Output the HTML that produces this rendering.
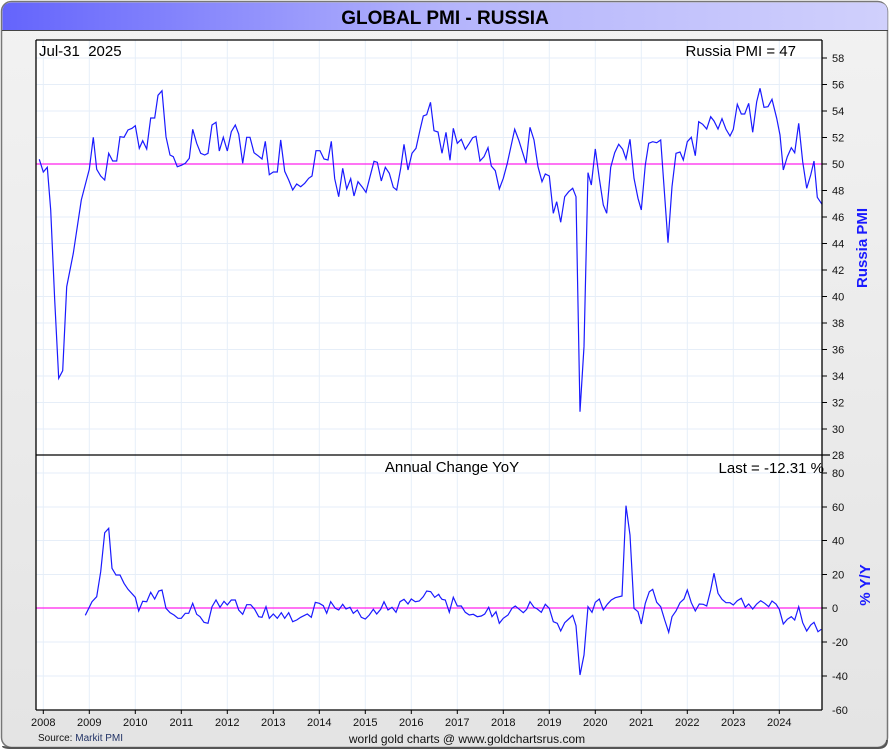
<!DOCTYPE html>
<html><head><meta charset="utf-8"><style>
html,body{margin:0;padding:0;background:#fff;}
svg{display:block;font-family:"Liberation Sans",Arial,sans-serif;}
</style></head><body>
<svg width="890" height="750" viewBox="0 0 890 750" xmlns="http://www.w3.org/2000/svg">
<defs>
<linearGradient id="tb" x1="0" x2="1" y1="0" y2="0">
<stop offset="0" stop-color="#6464fc"/><stop offset="0.5" stop-color="#b4b4fc"/><stop offset="1" stop-color="#d0d0fc"/></linearGradient>
<linearGradient id="bg" x1="0" x2="0" y1="0" y2="1">
<stop offset="0" stop-color="#f2f2f2"/><stop offset="1" stop-color="#e4e4e4"/></linearGradient>
</defs>
<rect x="0" y="0" width="890" height="750" fill="#fff"/>
<rect x="1.5" y="1.5" width="886" height="746" rx="10" fill="url(#bg)" stroke="#777" stroke-width="1.5"/>
<path d="M3 746 Q3 748 12 748 L878 748 Q887 748 887 740" fill="none" stroke="#555" stroke-width="2"/>
<path d="M2.5 30 L2.5 12 Q2.5 2.5 12 2.5 L878 2.5 Q887.5 2.5 887.5 12 L887.5 30 Z" fill="url(#tb)"/>
<line x1="2" y1="30.5" x2="888" y2="30.5" stroke="#444" stroke-width="1"/>
<text x="445" y="24" text-anchor="middle" font-size="19" font-weight="bold" fill="#000">GLOBAL PMI - RUSSIA</text>
<rect x="36" y="40" width="786" height="670" fill="#fff"/>
<g stroke="#e6eef8" stroke-width="1">
<path d="M43.3 40V710M89.3 40V710M135.3 40V710M181.3 40V710M227.3 40V710M273.3 40V710M319.3 40V710M365.3 40V710M411.3 40V710M457.3 40V710M503.3 40V710M549.3 40V710M595.3 40V710M641.3 40V710M687.3 40V710M733.3 40V710M779.3 40V710"/>
<path d="M36 58H822M36 84.5H822M36 111H822M36 137.5H822M36 190.5H822M36 217H822M36 243.5H822M36 270H822M36 296.5H822M36 323H822M36 349.5H822M36 376H822M36 402.5H822M36 429H822"/>
<path d="M36 473H822M36 507H822M36 540.5H822M36 574.5H822M36 642H822M36 676H822"/>
</g>
<line x1="36" y1="164" x2="822" y2="164" stroke="#ff22ee" stroke-width="1.3"/>
<line x1="36" y1="608" x2="822" y2="608" stroke="#ff22ee" stroke-width="1.3"/>
<polyline fill="none" stroke="#1a1aff" stroke-width="1.2" points="39.3,159.3 43.3,172 47.3,167.3 50.7,210 54.7,300 58.7,378.3 62.7,370.7 66.7,286.7 73.3,253.3 81.3,200 89.3,169.3 93.3,137.3 96.7,169.3 100.7,176 104.7,180 108.7,153.3 112.7,161 116.7,161 120,136.7 124,137.3 128,130 132,128.3 135.3,125.7 139.3,148.3 142.7,140.7 146.7,149 150.7,118 154.7,118 158,95.3 162,90.7 166,136.7 170,155 173.3,156.7 177.3,166.7 181.3,165.3 185.3,163.3 189.3,158.3 192.7,129.3 196.7,143.3 200.7,153.3 204.7,155 208,153.3 212,125 216,122.3 219.3,151 223.3,137.3 227.3,151 231.3,131.7 235.3,125 238.7,134 242.7,163.3 246.7,137.3 250,137.3 254,152.7 258,155.7 262,159 265.3,141.3 269.3,174.7 273.3,172 277.3,172 280.7,140 284.7,171.3 288.7,180 292.7,190 296.7,184 300.7,186.7 304.7,183.3 308.7,178.3 312,176 316,150.7 320,150.7 324,159 328,160 331.3,141.3 334.7,178.7 338.7,196.7 342.7,168.3 346.7,189 350.7,178.7 354,196 358,181.7 362,186.7 366,192.3 370,176.7 374,161.3 377.3,162.3 381.3,181 385.3,167.3 389.3,173.3 393.3,187.3 396.7,190 400.7,168.3 404,144.3 408,170 412,153.3 416,148.3 420,130 423.3,116 426.7,114.7 430.5,102.3 434,130.7 438,132 442,153.3 446,132.3 450,160.3 453.3,128.3 457.3,143.3 461.3,139.3 465.3,149.3 469.3,143.3 472.7,137.7 476,136.3 480,161 484,156.7 488,147.7 491.3,166 495.3,170.7 499.3,189 503.3,178.3 507.3,163.3 514.7,129.3 518.7,140 526,163.3 530,127.3 534,140 538,166.7 542,181.7 545.3,174 549.3,176 553.3,213.3 556.7,201.7 560.7,222.3 564.7,196.7 568.7,191.7 572.7,188.3 576,196.7 580,411.7 584,346.7 588,172.7 591.3,185 595.3,149 599.3,178.3 603.3,205 606.7,213.3 610.7,167.3 614.7,152.7 618.7,144.3 622.7,149.3 626,159 630,139.3 634,178.3 638,198.3 641.3,210 645.3,165 648.7,143.3 652.7,141.7 656.7,142.7 660.7,140 668,242.7 672,186.7 676,153.3 680,152 683.3,160 687.3,141.7 691.3,137.3 695.3,155.7 698.7,121.7 702.7,124.3 706.7,129 710.7,116.7 714,121 718,129 722,118.7 726,129.3 730,136 733.3,129.3 737.3,104.3 741.3,114 744.7,114 748.7,103.3 752.7,132.3 756.7,101.7 760,88.3 764,107.3 768,106.7 772,99.3 776.7,118.3 780,135 783.3,170 787.3,156.7 791.3,147.7 794.7,152.7 798.7,123.3 802.7,161.7 806.7,188.3 810.7,175 814,161 817.3,197.3 822,204.3"/>
<polyline fill="none" stroke="#1a1aff" stroke-width="1.2" points="85.3,615.3 92,601.7 96.7,596.7 100.7,571.7 104.7,532.7 108.7,528.3 112,568.3 116,575 120,575 124,583.3 128,589.3 135.3,597.3 138.7,611 142.7,601.3 146.7,601.7 150.7,592.3 154.7,599 158.7,591 162,590 166,608.3 170,612.7 174,615 178,618.3 181.3,618.3 185.3,613.3 188.7,613.3 192.7,603.3 196.7,614.3 200,616.7 204,622.3 208,623.3 212,606.7 216,600 220,607.3 224,601.3 227.3,605 231.3,600 235.3,600 238.7,610 242.7,614.3 246.7,604.7 250.7,604.7 254.7,609.3 258.7,616.7 262,617.3 266,606.7 269.3,618.3 273.3,614 277.3,618.3 281.3,612.7 284.7,618.3 288.7,612.7 292.7,621.7 296.7,620 300.7,617.3 307.3,614 311.3,617.3 315.3,602.3 319.3,603.3 323.3,605.7 326.7,613.3 330.7,601.7 335.3,608.3 338.7,610 342.7,604.3 346,609 350,607.3 353.3,613.3 357.3,610 361.3,617.3 365.3,619 369.3,615 373.3,609.3 376.7,614 380.7,609.3 384,601.7 388,610 392,607.3 396,612.3 400,601.7 404,599.3 408,604 411.3,599 415.3,601.7 419.3,601 423.3,596.7 426.7,591 430.7,591.7 434.7,597.3 438.7,594.3 440,596.7 442,599.3 445.3,600 449.3,612.3 453.3,597.3 457.3,606 461.3,606 465.3,612.3 469.3,615 473.3,614.3 477.3,616.7 481.3,616 484.7,614 488.7,607.3 492,616.7 496,611.7 499.3,623.3 503.3,618.3 508,615 512,608.3 515.3,606 519.3,609.3 523.3,612.7 526.7,609.3 530,601.7 534,607.3 537.3,609 541.3,612.3 545.3,604.3 549.3,608.3 553.3,621.7 557.3,623.3 560.7,631 564.7,622.7 568.7,619 572.7,615.3 576,625.7 580,675 584,655 588,606.7 592,612.3 595.3,602.3 599.3,599 603.3,610 607.3,604.3 611.3,600 615.3,597.7 622,596 626,505.7 630,535 634,608.3 638,611.7 641.3,624 645.3,603.3 649.3,591.7 652.7,589.3 656.7,602.3 660.7,606.7 664.7,620 668.7,632.3 672,616.7 676,611 680,602.7 684,599 687.3,590 691.3,602.7 695.3,611 699.3,604 703.3,604.3 706.7,606 710.7,590 714,573.3 718,593.3 722,599.3 726,602.7 730,602.7 733.3,605 737.3,600.7 741.3,598.3 745.3,607.3 748.7,604 752.7,609 756.7,604 760.7,600.7 764.7,603.3 768.7,606.7 772,601 776,604 779.3,609.3 783.3,624 787.3,619.3 791.3,616.7 794.7,620 798.7,606.7 802.7,622.7 806.7,631 810.7,625 814,622.3 818,631.7 821.3,629.3"/>
<g stroke="#000" stroke-width="1.3" fill="none">
<line x1="36" y1="40" x2="822" y2="40"/>
<line x1="36" y1="40" x2="36" y2="710"/>
<line x1="36" y1="710" x2="822" y2="710"/>
<line x1="822" y1="40" x2="822" y2="710"/>
<line x1="36" y1="455" x2="830" y2="455"/>
</g>
<g stroke="#000" stroke-width="1">
<path d="M822 58h5M822 84.5h5M822 111h5M822 137.5h5M822 164h5M822 190.5h5M822 217h5M822 243.5h5M822 270h5M822 296.5h5M822 323h5M822 349.5h5M822 376h5M822 402.5h5M822 429h5"/>
<path d="M822 473h5M822 507h5M822 540.5h5M822 574.5h5M822 608h5M822 642h5M822 676h5"/>
<path d="M43.3 710v4M89.3 710v4M135.3 710v4M181.3 710v4M227.3 710v4M273.3 710v4M319.3 710v4M365.3 710v4M411.3 710v4M457.3 710v4M503.3 710v4M549.3 710v4M595.3 710v4M641.3 710v4M687.3 710v4M733.3 710v4M779.3 710v4"/>
</g>
<g font-size="11" fill="#111">
<text x="832" y="62">58</text><text x="832" y="88.5">56</text><text x="832" y="115">54</text><text x="832" y="141.5">52</text><text x="832" y="168">50</text><text x="832" y="194.5">48</text><text x="832" y="221">46</text><text x="832" y="247.5">44</text><text x="832" y="274">42</text><text x="832" y="300.5">40</text><text x="832" y="327">38</text><text x="832" y="353.5">36</text><text x="832" y="380">34</text><text x="832" y="406.5">32</text><text x="832" y="433">30</text><text x="832" y="459">28</text>
<text x="832" y="477">80</text><text x="832" y="511">60</text><text x="832" y="544.5">40</text><text x="832" y="578.5">20</text><text x="832" y="612">0</text><text x="832" y="646">-20</text><text x="832" y="680">-40</text><text x="832" y="714">-60</text>
</g>
<g font-size="11" fill="#111" text-anchor="middle">
<text x="43.3" y="726">2008</text><text x="89.3" y="726">2009</text><text x="135.3" y="726">2010</text><text x="181.3" y="726">2011</text><text x="227.3" y="726">2012</text><text x="273.3" y="726">2013</text><text x="319.3" y="726">2014</text><text x="365.3" y="726">2015</text><text x="411.3" y="726">2016</text><text x="457.3" y="726">2017</text><text x="503.3" y="726">2018</text><text x="549.3" y="726">2019</text><text x="595.3" y="726">2020</text><text x="641.3" y="726">2021</text><text x="687.3" y="726">2022</text><text x="733.3" y="726">2023</text><text x="779.3" y="726">2024</text>
</g>
<text x="39" y="56" font-size="15" fill="#000">Jul-31&#160; 2025</text>
<text x="796" y="56" font-size="15" fill="#000" text-anchor="end">Russia PMI = 47</text>
<text x="452" y="472" font-size="15" fill="#000" text-anchor="middle">Annual Change YoY</text>
<text x="824" y="473" font-size="15" fill="#000" text-anchor="end">Last = -12.31 %</text>
<text transform="translate(867,248) rotate(-90)" font-size="15" font-weight="bold" fill="#1a1aff" text-anchor="middle">Russia PMI</text>
<text transform="translate(870,585) rotate(-90)" font-size="15" font-weight="bold" fill="#1a1aff" text-anchor="middle">% Y/Y</text>
<text x="38" y="741" font-size="10" fill="#111">Source: <tspan fill="#223366">Markit PMI</tspan></text>
<text x="467" y="743" font-size="12" fill="#111" text-anchor="middle">world gold charts @ www.goldchartsrus.com</text>
</svg>
</body></html>
